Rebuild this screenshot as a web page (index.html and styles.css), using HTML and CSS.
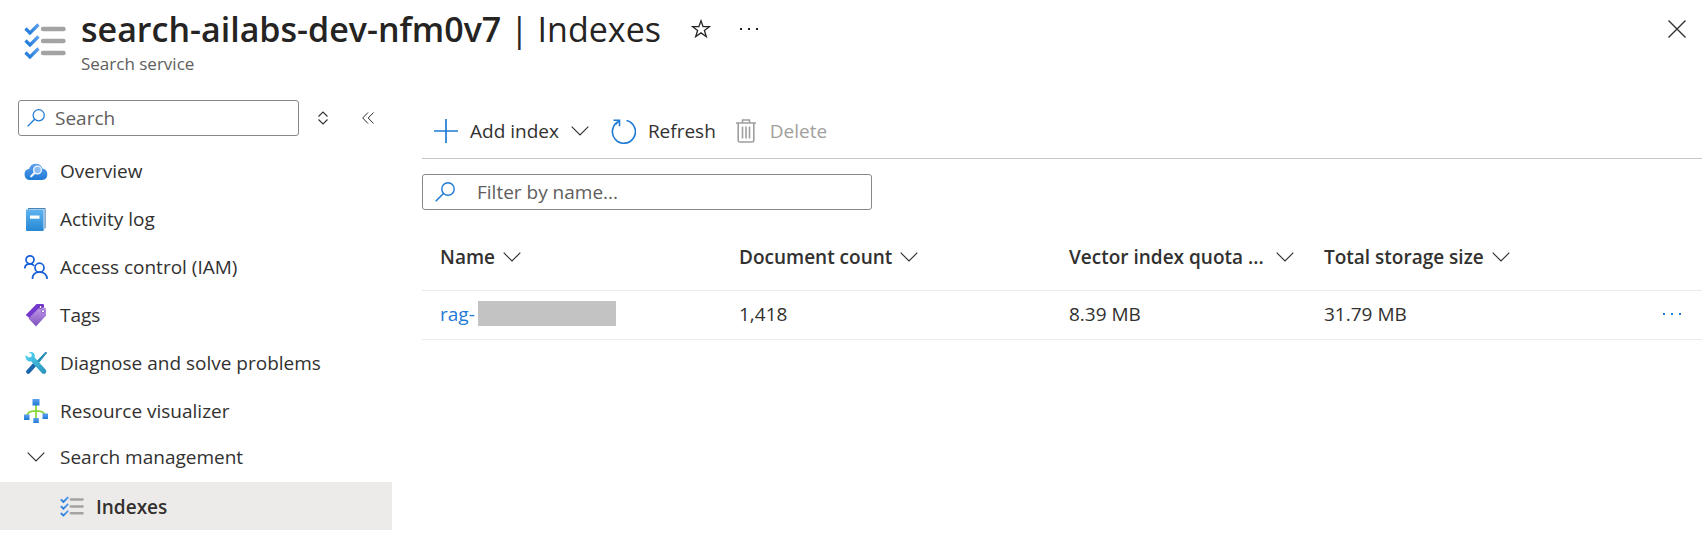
FILE: index.html
```html
<!DOCTYPE html>
<html lang="en">
<head>
<meta charset="utf-8">
<title>search-ailabs-dev-nfm0v7 | Indexes</title>
<link rel="stylesheet" href="styles.css">
</head>
<body>
<svg class="defs" aria-hidden="true">
  <defs>
    <linearGradient id="blue" x1="0" y1="0" x2="0" y2="1"><stop offset="0" stop-color="#5ea0ef"/><stop offset="1" stop-color="#1f7ad6"/></linearGradient>
    <linearGradient id="check" x1="1" y1="0" x2="0" y2="1"><stop offset="0" stop-color="#5ea0ef"/><stop offset="1" stop-color="#1a78d8"/></linearGradient>
    <linearGradient id="book" x1="0" y1="0" x2="0" y2="1"><stop offset="0" stop-color="#5fb4f0"/><stop offset="1" stop-color="#2587d4"/></linearGradient>
    <linearGradient id="tag" x1="0" y1="0" x2="0" y2="1"><stop offset="0" stop-color="#c09be8"/><stop offset="1" stop-color="#7d50bd"/></linearGradient>
    <linearGradient id="wrench" x1="0" y1="0" x2="1" y2="1"><stop offset="0" stop-color="#50d8f7"/><stop offset="1" stop-color="#2a8fb8"/></linearGradient>
    <symbol id="checklist" viewBox="0 0 42 38">
      <g fill="none" stroke="url(#check)" stroke-width="3.2"><path d="M1.500 5.500l4.500 4.500L14.500 1.500"/><path d="M1.500 17.500l4.500 4.500L14.500 13.500"/><path d="M1.500 29.500l4.500 4.500L14.500 25.500"/></g>
      <g stroke="#a3a3a3" stroke-width="4.400" stroke-linecap="round"><path d="M19 6h20.500M19 18h20.500M19 30h20.500"/></g>
    </symbol>
    <symbol id="chevron" viewBox="0 0 18 10"><path d="M.7.7L9 9 17.300.7" fill="none" stroke="currentColor" stroke-width="1.150"/></symbol>
    <symbol id="search" viewBox="0 0 20 20"><circle cx="13" cy="7" r="6.200" fill="none" stroke="#1f7ad6" stroke-width="1.400"/><path d="M8.500 11.500L.7 19.300" stroke="#1f7ad6" stroke-width="1.500"/></symbol>
    <symbol id="dots" viewBox="0 0 18 4"><path d="M0 1h2v2H0zM8 1h2v2H8zM16 1h2v2h-2z" fill="currentColor"/></symbol>
  </defs>
</svg>

<header class="header">
  <svg class="header-icon"><use href="#checklist"/></svg>
  <div class="header-text">
    <div class="title-row">
      <h1 class="title"><strong class="title-name">search-ailabs-dev-nfm0v7</strong> | Indexes</h1>
      <button class="icon-button star" aria-label="Favorite"><svg width="20" height="20" viewBox="0 0 20 20"><path d="M10 1.800l2.100 5.900h6.300l-5 3.800 1.900 6.200-5.300-3.800-5.300 3.800 1.900-6.200-5-3.800h6.300z" fill="none" stroke="currentColor" stroke-width="1.300"/></svg></button>
      <button class="icon-button" aria-label="More"><svg width="18" height="4"><use href="#dots"/></svg></button>
    </div>
    <p class="subtitle">Search service</p>
  </div>
  <button class="icon-button close" aria-label="Close"><svg width="18" height="18" viewBox="0 0 18 18"><path d="M.5.5l17 17M17.500.5l-17 17" stroke="currentColor" stroke-width="1.400"/></svg></button>
</header>

<div class="layout">
  <aside class="sidebar">
    <div class="sidebar-tools">
      <label class="field menu-search"><svg width="18" height="18"><use href="#search"/></svg><input type="text" placeholder="Search" aria-label="Search"></label>
      <button class="icon-button expand" aria-label="Expand all"><svg width="12" height="14" viewBox="0 0 12 14"><path d="M1.500 5.500L6 1l4.500 4.500M1.500 8.500L6 13l4.500-4.500" fill="none" stroke="currentColor" stroke-width="1.100"/></svg></button>
      <button class="icon-button" aria-label="Collapse menu"><svg width="12" height="12" viewBox="0 0 12 12"><path d="M6 .5L.7 6 6 11.500M11.500.5L6.200 6l5.300 5.500" fill="none" stroke="currentColor"/></svg></button>
    </div>
    <nav class="nav">
      <a class="nav-item" href="#"><svg width="24" height="24" viewBox="0 0 24 24"><path d="M6 21a5.700 5.700 0 0 1-.8-11.300A7 7 0 0 1 18.500 9.500 5.800 5.800 0 0 1 18 21z" fill="url(#blue)"/><circle cx="13.500" cy="11" r="3.900" fill="#8bbcf5" stroke="#f2f6fc" stroke-width="1.300"/><path d="M10.500 14l-3.300 3.300" stroke="#f2f6fc" stroke-width="2.200" stroke-linecap="round"/></svg>Overview</a>
      <a class="nav-item" href="#"><svg width="24" height="24" viewBox="0 0 24 24"><path d="M4 1h16.500q1 0 1 1v19l-1.500 1.500H4z" fill="#1d5f9e"/><path d="M4 1.800h16.700v20.500H19z" fill="#dbe9f6"/><path d="M2 2.500h17.500V24H3q-1 0-1-1z" fill="url(#book)"/><path d="M6 8.500h9.500v3.200H6z" fill="#fff"/></svg>Activity log</a>
      <a class="nav-item" href="#"><svg width="24" height="24" viewBox="0 0 24 24" fill="none" stroke="#155fd8" stroke-width="1.700"><circle cx="6" cy="4.800" r="4"/><path d="M.8 13.500C.8 10 3 8.800 6 8.800q2.500 0 4.300 2"/><circle cx="15.500" cy="12.700" r="4.500"/><path d="M8.500 24c0-4.500 3-6.800 7-6.800s7.300 2.300 7.600 6.800"/></svg>Access control (IAM)</a>
      <a class="nav-item" href="#"><svg width="24" height="24" viewBox="0 0 24 24"><path d="M12.500 1h6.200q1.300 0 1.300 1.300v4L6 15.500 1.800 12z" fill="#7437cf"/><path d="M15.500 4.500h5q1.500 0 1.500 1.500v6.500L12 23.500l-7.500-8z" fill="url(#tag)"/><circle cx="16.500" cy="4" r="1.500" fill="#fff" stroke="#55279e"/><circle cx="19" cy="8.200" r="1.600" fill="#fff" stroke="#8a5bc9"/></svg>Tags</a>
      <a class="nav-item" href="#"><svg width="24" height="24" viewBox="0 0 24 24"><path d="M21.800 1L22.500 2 13.500 13l-1.700-1.500z" fill="#278db5" stroke="#278db5"/><path d="M9.500 11.800l3 3-7 7.700q-1.500 1-2.800-.2T2.500 19.500z" fill="#1b67ad"/><path d="M4.800 1.500q3-1.300 5 .8 1.700 2 .9 4.300l11.300 12.300q1 2-.5 3.300t-3.200.3L7 10.300Q4 10.800 2.300 8.500.9 6.500 1.700 4l3 2.600 2.700-.8.500-2.500z" fill="url(#wrench)"/></svg>Diagnose and solve problems</a>
      <a class="nav-item" href="#"><svg width="24" height="24" viewBox="0 0 24 24"><path d="M12 6v14M3 17c0-4 3-5.200 9-5.200s9 1.200 9 5.200" fill="none" stroke="#86d633" stroke-width="1.700"/><path d="M8.500 0h7v6.500h-7z" fill="url(#blue)"/><path d="M0 15.500h5.500V21H0z" fill="url(#blue)"/><path d="M18.500 14.500H24V20h-5.500z" fill="url(#blue)"/><path d="M9.300 19h5.500v5H9.300z" fill="url(#blue)"/></svg>Resource visualizer</a>
      <button class="nav-item nav-group" aria-expanded="true"><svg class="nav-chevron"><use href="#chevron"/></svg>Search management</button>
      <a class="nav-item nav-child" href="#" aria-current="page"><svg width="24" height="22"><use href="#checklist"/></svg>Indexes</a>
    </nav>
  </aside>

  <main class="main">
    <div class="toolbar">
      <button class="command add"><svg width="24" height="24" viewBox="0 0 24 24"><path d="M12 0v24M0 12h24" stroke="#1f7ad6" stroke-width="1.700"/></svg>Add index<svg class="chevron"><use href="#chevron"/></svg></button>
      <button class="command refresh"><svg width="25" height="25" viewBox="0 0 25 25" fill="none" stroke="#1f7ad6" stroke-width="1.600"><path d="M15.500 1.500A11.500 11.500 0 1 1 8 2.300M2.500 1.200h6v6M8.500 1.200L4.500 5.500"/></svg>Refresh</button>
      <button class="command delete" disabled><svg width="20" height="24" viewBox="0 0 20 24" fill="none" stroke="#a19f9d" stroke-width="1.600"><path d="M0 4h20M6.500 4V1h7v3M2.200 4v17.500q0 1.500 1.500 1.500h12.600q1.500 0 1.500-1.500V4M6.500 7.500v12M10 7.500v12M13.500 7.500v12"/></svg>Delete</button>
    </div>
    <label class="field filter"><svg width="20" height="20"><use href="#search"/></svg><input type="text" placeholder="Filter by name..." aria-label="Filter by name"></label>
    <table class="table">
      <colgroup><col class="col-name"><col class="col-count"><col class="col-quota"><col><col class="col-menu"></colgroup>
      <thead>
        <tr>
          <th scope="col"><button class="sort">Name<svg class="chevron"><use href="#chevron"/></svg></button></th>
          <th scope="col"><button class="sort">Document count<svg class="chevron"><use href="#chevron"/></svg></button></th>
          <th scope="col"><button class="sort sort-wide">Vector index quota ...<svg class="chevron"><use href="#chevron"/></svg></button></th>
          <th scope="col"><button class="sort">Total storage size<svg class="chevron"><use href="#chevron"/></svg></button></th>
          <td></td>
        </tr>
      </thead>
      <tbody>
        <tr>
          <td><a class="index-link" href="#">rag-<span class="redacted"></span></a></td>
          <td>1,418</td>
          <td>8.39 MB</td>
          <td>31.79 MB</td>
          <td><button class="icon-button row-menu" aria-label="Row actions"><svg width="18" height="4"><use href="#dots"/></svg></button></td>
        </tr>
      </tbody>
    </table>
  </main>
</div>
</body>
</html>
```
FILE: styles.css
```css
* { box-sizing: border-box; }
body {
  margin: 0;
  background: #fff;
  color: #323130;
  font-family: "Segoe UI", "Open Sans", "Noto Sans", sans-serif;
  font-size: 19px;
  line-height: 28px;
}
svg { display: block; flex: none; }
.defs { position: absolute; width: 0; height: 0; }
button {
  padding: 0;
  border: 0;
  background: none;
  color: inherit;
  font: inherit;
  cursor: pointer;
}
a { text-decoration: none; }
.icon-button { display: flex; flex: none; }

.header {
  display: flex;
  align-items: flex-start;
  padding: 4px 22px 0 24px;
}
.header-icon { width: 42px; height: 38px; margin: 19px 15px 0 0; }
.header-text { flex: 1; min-width: 0; }
.title-row { display: flex; align-items: center; color: #252423; }
.title { margin: 0; font-size: 34px; line-height: 50px; font-weight: 400; white-space: nowrap; }
.title-name { font-weight: 600; }
.star { margin: 0 29px 0 30px; }
.subtitle { margin: 0; color: #605e5c; font-size: 17px; line-height: 20px; }
.close { margin-top: 16px; }

.layout { display: flex; align-items: flex-start; gap: 30px; padding: 26px 6px 0 0; }
.sidebar { flex: none; width: 392px; }
.sidebar-tools { display: flex; align-items: center; padding: 0 18px; }
.field {
  display: flex;
  align-items: center;
  height: 36px;
  border: 1px solid #8a8886;
  border-radius: 3px;
}
.field input {
  flex: 1;
  min-width: 0;
  padding: 0;
  border: 0;
  outline: 0;
  background: none;
  color: inherit;
  font: inherit;
}
.field input::placeholder { color: #605e5c; opacity: 1; }
.menu-search { width: 281px; padding: 0 8px; gap: 10px; }
.expand { margin: 0 33px 0 18px; }

.nav { padding-top: 11px; }
.nav-item {
  display: flex;
  align-items: center;
  gap: 12px;
  width: 100%;
  height: 48px;
  padding-left: 24px;
  color: #323130;
}
.nav-group { height: 47px; gap: 15px; padding: 0 0 4px 27px; }
.nav-chevron { width: 18px; height: 10px; }
.nav-child { padding: 2px 0 0 60px; background: #edebe9; font-weight: 600; }

.main { flex: 1; min-width: 0; }
.toolbar {
  display: flex;
  align-items: center;
  height: 59px;
  padding: 4px 0 0 12px;
  border-bottom: 1px solid #c8c6c4;
}
.command { display: flex; align-items: center; gap: 12px; white-space: nowrap; }
.add { margin-right: 22px; }
.refresh { margin-right: 20px; }
.delete { gap: 14px; color: #a19f9d; cursor: default; }
.chevron { width: 18px; height: 10px; }
.filter { width: 450px; max-width: 100%; margin-top: 15px; padding: 0 12px; gap: 22px; }

.table { width: 100%; margin-top: 14px; border-collapse: collapse; table-layout: fixed; }
.col-name { width: 299px; }
.col-count { width: 330px; }
.col-quota { width: 255px; }
.col-menu { width: 57px; }
.table th, .table td {
  height: 49px;
  padding: 0 0 2px 18px;
  border-bottom: 1px solid #edebe9;
  text-align: left;
  white-space: nowrap;
}
.table th { height: 66px; padding-bottom: 0; font-weight: 600; }
.sort { display: flex; align-items: center; gap: 8px; }
.sort-wide { gap: 12px; }
.index-link { display: flex; align-items: center; gap: 3px; color: #1f7ad6; }
.redacted { width: 138px; height: 25px; background: #c3c3c3; }
.row-menu { color: #1f7ad6; }
```
